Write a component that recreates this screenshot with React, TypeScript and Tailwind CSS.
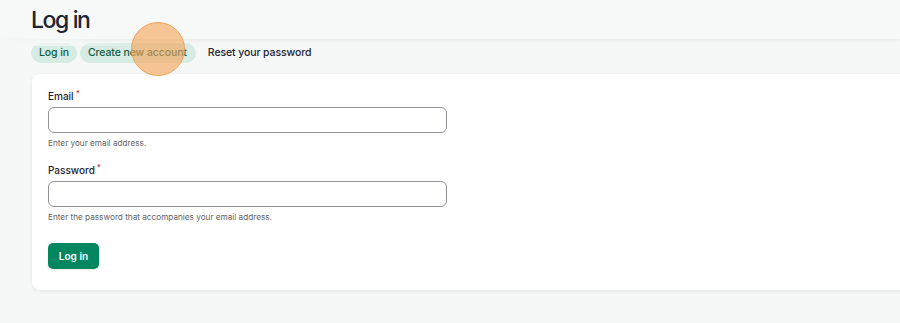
import React from "react";

export default function App() {
  return (
    <div
      className="relative w-[900px] h-[323px] overflow-hidden bg-[#f5f8f7] text-[#222330]"
      style={{ fontFamily: "Inter, 'Noto Sans', sans-serif" }}
    >
      {/* header */}
      <div className="relative h-[39px] pl-[31px] pt-[6px] shadow-[0_2px_3px_rgba(0,0,0,0.05)] bg-[#f6f9f8]">
        <h1 className="text-[23px] leading-[28px] font-medium tracking-[-1.4px] text-[#222330]">Log in</h1>
      </div>
      <div className="pointer-events-none absolute left-0 top-[38px] h-[8px] w-[160px] bg-gradient-to-r from-[#f5f8f7] to-transparent" />

      {/* tabs */}
      <div className="mt-[4px] flex items-center gap-[3px] pl-[31px] h-[20px]">
        <div className="h-[20px] px-[8px] rounded-full bg-[#d5ebe3] text-[#135c44] text-[10.5px] font-medium tracking-[-0.1px] flex items-center">Log in</div>
        <div className="h-[20px] pl-[8px] pr-[9px] rounded-full bg-[#d5ebe3] text-[#135c44] text-[10.5px] font-medium tracking-[-0.1px] flex items-center">Create new account</div>
        <div className="h-[20px] px-[8px] ml-[1px] text-[#222330] text-[10.5px] font-medium tracking-[-0.1px] flex items-center">Reset your password</div>
      </div>

      {/* card */}
      <div className="mt-[11px] ml-[32px] w-[900px] rounded-[8px] bg-white shadow-[0_1px_4px_rgba(0,0,0,0.08)] pl-[16px] pt-[15px] pb-[21px]">
        <div className="text-[10px] leading-[14px] font-medium text-[#222330]">
          Email<span className="ml-[2px] align-top text-[8px] leading-[8px] text-[#b0323a]">*</span>
        </div>
        <div className="mt-[4px] h-[26px] w-[399px] rounded-[6px] border border-[#919297]" />
        <div className="mt-[4px] text-[8.2px] leading-[12px] text-[#5f6368]">Enter your email address.</div>

        <div className="mt-[14px] text-[10px] leading-[14px] font-medium text-[#222330]">
          Password<span className="ml-[2px] align-top text-[8px] leading-[8px] text-[#b0323a]">*</span>
        </div>
        <div className="mt-[4px] h-[26px] w-[399px] rounded-[6px] border border-[#919297]" />
        <div className="mt-[4px] text-[8.2px] leading-[12px] text-[#5f6368]">Enter the password that accompanies your email address.</div>

        <button className="mt-[20px] h-[26px] w-[51px] rounded-[5px] bg-[#00875f] text-white text-[10px] font-semibold flex items-center justify-center shadow-[0_1px_2px_rgba(0,0,0,0.1)]">
          Log in
        </button>
      </div>

      {/* click indicator */}
      <div className="pointer-events-none absolute left-[131px] top-[22px] h-[54px] w-[54px] rounded-full border-[1.5px] border-[#f2a45c] bg-[rgba(246,164,88,0.62)]" />
    </div>
  );
}
